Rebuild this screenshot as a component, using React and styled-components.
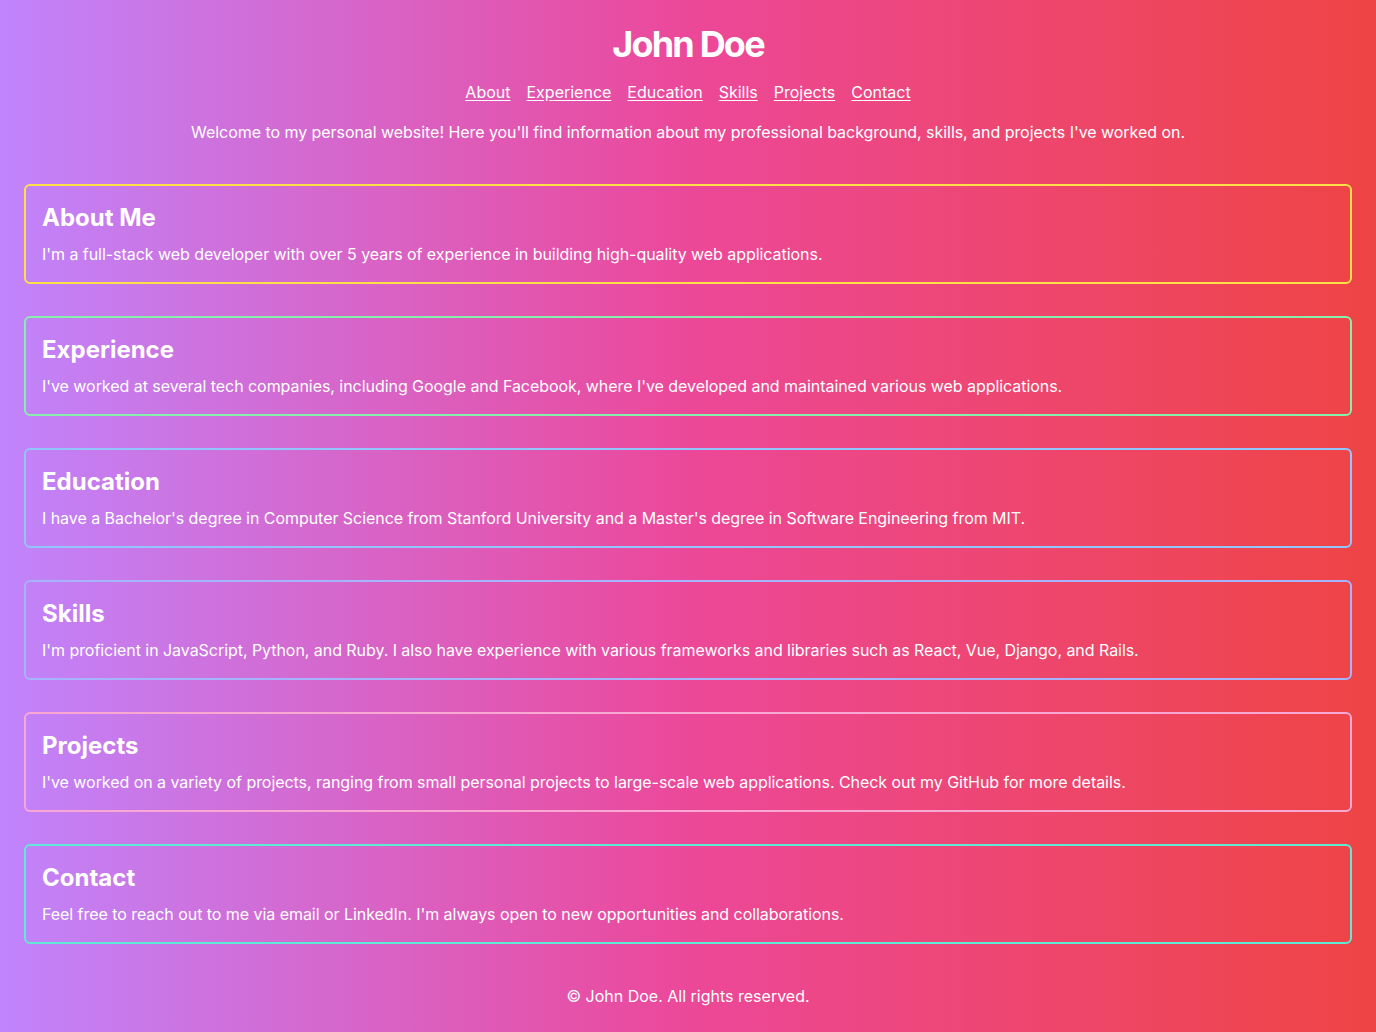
import React from "react";
import styled, { createGlobalStyle } from "styled-components";

const GlobalStyle = createGlobalStyle`
  html, body {
    margin: 0;
    padding: 0;
  }
  body {
    font-family: Inter, "Noto Sans", sans-serif;
    color: #ffffff;
    background: linear-gradient(to right, #c084fc, #ec4899, #ef4444);
    min-height: 100vh;
  }
  * {
    box-sizing: border-box;
  }
`;

const Page = styled.div`
  display: flex;
  flex-direction: column;
  padding: 24px;
  min-height: 100vh;
`;

const Header = styled.header`
  display: flex;
  flex-direction: column;
  align-items: center;
  text-align: center;
`;

const Title = styled.h1`
  margin: 0;
  font-size: 36px;
  line-height: 40px;
  font-weight: 700;
  letter-spacing: -0.05em;
`;

const Nav = styled.nav`
  display: flex;
  gap: 16px;
  margin-top: 16px;
`;

const NavLink = styled.a`
  color: #ffffff;
  font-size: 16px;
  line-height: 24px;
  text-decoration: underline;
  text-underline-offset: 2px;
`;

const Intro = styled.p`
  margin: 16px 0 0;
  font-size: 16px;
  line-height: 24px;
  letter-spacing: -0.05px;
`;

const Main = styled.main`
  display: flex;
  flex-direction: column;
  gap: 32px;
  margin-top: 40px;
`;

const Section = styled.section`
  border: 2px solid ${(p) => p.$border};
  border-radius: 6px;
  padding: 16px;
`;

const SectionTitle = styled.h2`
  margin: 0 0 8px;
  font-size: 24px;
  line-height: 32px;
  font-weight: 700;
`;

const SectionText = styled.p`
  margin: 0;
  font-size: 16px;
  line-height: 24px;
  letter-spacing: -0.05px;
`;

const Footer = styled.footer`
  margin-top: 40px;
  text-align: center;
  font-size: 16px;
  line-height: 24px;
`;

const sections = [
  {
    id: "about",
    title: "About Me",
    border: "#fde047",
    text: "I'm a full-stack web developer with over 5 years of experience in building high-quality web applications.",
  },
  {
    id: "experience",
    title: "Experience",
    border: "#86efac",
    text: "I've worked at several tech companies, including Google and Facebook, where I've developed and maintained various web applications.",
  },
  {
    id: "education",
    title: "Education",
    border: "#93c5fd",
    text: "I have a Bachelor's degree in Computer Science from Stanford University and a Master's degree in Software Engineering from MIT.",
  },
  {
    id: "skills",
    title: "Skills",
    border: "#a5b4fc",
    text: "I'm proficient in JavaScript, Python, and Ruby. I also have experience with various frameworks and libraries such as React, Vue, Django, and Rails.",
  },
  {
    id: "projects",
    title: "Projects",
    border: "#f9a8d4",
    text: "I've worked on a variety of projects, ranging from small personal projects to large-scale web applications. Check out my GitHub for more details.",
  },
  {
    id: "contact",
    title: "Contact",
    border: "#5eead4",
    text: "Feel free to reach out to me via email or LinkedIn. I'm always open to new opportunities and collaborations.",
  },
];

const links = ["About", "Experience", "Education", "Skills", "Projects", "Contact"];

function App() {
  return (
    <>
      <GlobalStyle />
      <Page>
        <Header>
          <Title>John Doe</Title>
          <Nav>
            {links.map((link) => (
              <NavLink key={link} href={"#" + link.toLowerCase()}>
                {link}
              </NavLink>
            ))}
          </Nav>
          <Intro>
            Welcome to my personal website! Here you'll find information about my professional background, skills, and projects I've worked on.
          </Intro>
        </Header>
        <Main>
          {sections.map((s) => (
            <Section key={s.id} id={s.id} $border={s.border}>
              <SectionTitle>{s.title}</SectionTitle>
              <SectionText>{s.text}</SectionText>
            </Section>
          ))}
        </Main>
        <Footer>© John Doe. All rights reserved.</Footer>
      </Page>
    </>
  );
}

export default App;
